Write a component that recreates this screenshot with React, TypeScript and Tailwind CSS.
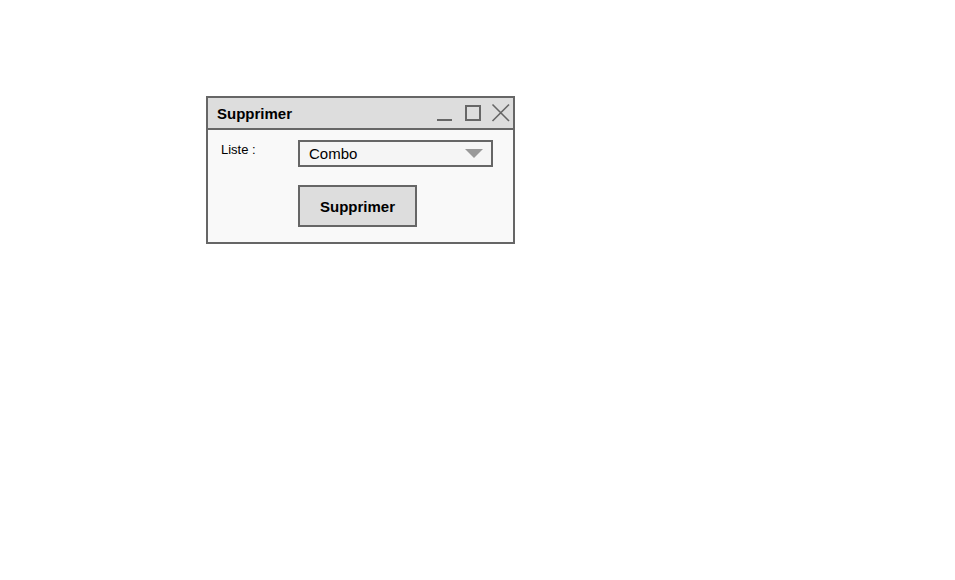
import React from 'react';

const WindowControls: React.FC = () => (
  <svg width="80" height="30" viewBox="0 0 80 30" fill="none" stroke="#666666" className="mr-[1px]">
    <line x1="5" y1="22" x2="20" y2="22" strokeWidth="2" />
    <rect x="34" y="8" width="14" height="14" strokeWidth="2" />
    <path d="M60.5 6.5 L77 23 M77 6.5 L60.5 23" strokeWidth="1.6" />
  </svg>
);

const App: React.FC = () => {
  return (
    <div
      className="min-h-screen bg-white pl-[206px] pt-[96px]"
      style={{ fontFamily: '"Liberation Sans", Arial, sans-serif' }}
    >
      <div className="w-[309px] border-2 border-[#666666] bg-[#f9f9f9]">
        <div className="flex h-[32px] items-center justify-between border-b-2 border-[#666666] bg-[#dddddd]">
          <span className="pl-[9px] pt-[3px] text-[15px] font-bold text-black">Supprimer</span>
          <WindowControls />
        </div>

        <div className="flex h-[112px] pl-[13px] pt-[10px]">
          <div className="w-[77px] pt-[2px] text-[13px] leading-[16px] text-black">Liste :</div>
          <div className="flex flex-col">
            <div className="flex h-[27px] w-[195px] items-center justify-between border-2 border-[#666666] bg-[#f5f5f5] pl-[9px] pr-[8px]">
              <span className="pt-[2px] text-[15px] text-black">Combo</span>
              <svg width="18" height="10" viewBox="0 0 18 10">
                <path d="M0 0 L18 0 L9 9 Z" fill="#999999" />
              </svg>
            </div>
            <button className="mt-[18px] flex h-[42px] w-[119px] items-center justify-center border-2 border-[#666666] bg-[#dddddd] pt-[2px] text-[15px] font-bold text-black">
              Supprimer
            </button>
          </div>
        </div>
      </div>
    </div>
  );
};

export default App;
